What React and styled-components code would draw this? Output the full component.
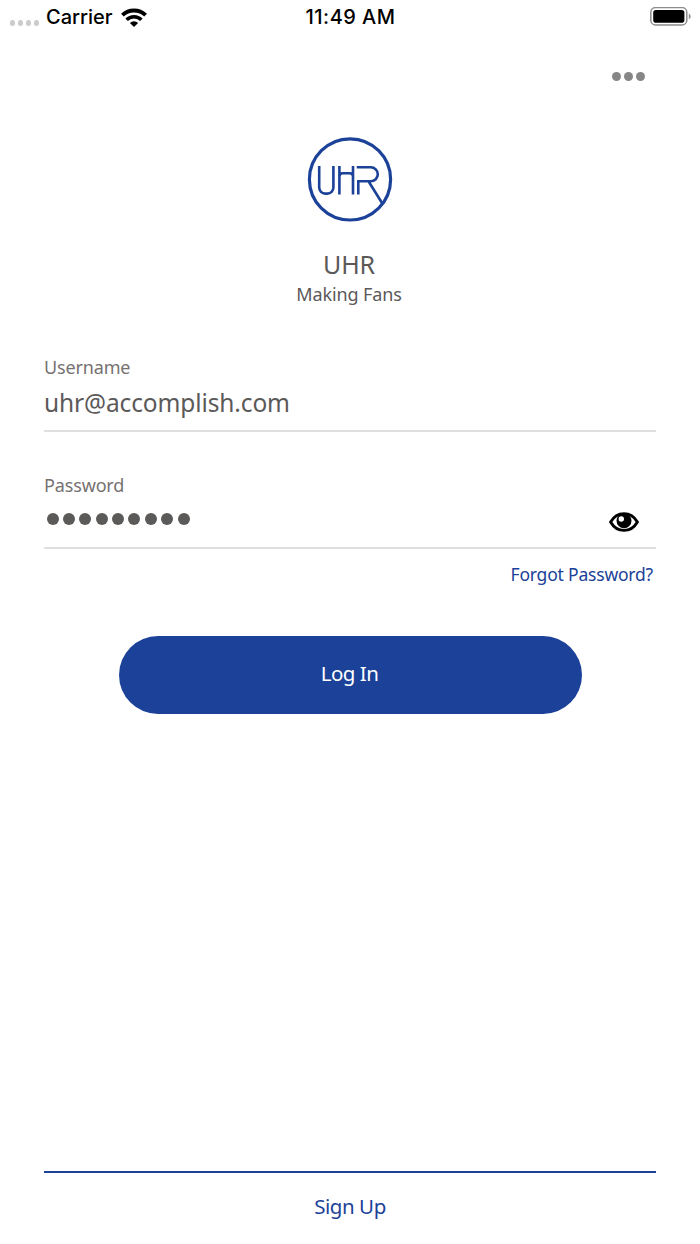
import React, { useState } from "react";
import styled, { createGlobalStyle, ThemeProvider } from "styled-components";

const theme = {
  blue: "#1b4298",
  text: "#5c5959",
  label: "#767171",
  line: "#e0e0e0",
};

const GlobalStyle = createGlobalStyle`
  * {
    box-sizing: border-box;
  }
  body {
    margin: 0;
    background: #fff;
    font-family: "Noto Sans", sans-serif;
  }
`;

const Screen = styled.div`
  width: 700px;
  height: 1244px;
  display: flex;
  flex-direction: column;
  overflow: hidden;
`;

const StatusBar = styled.header`
  height: 34px;
  display: grid;
  grid-template-columns: 1fr auto 1fr;
  align-items: center;
  padding: 0 9px 0 10px;
  font-family: Inter, sans-serif;
  font-size: 20px;
  line-height: 34px;
  font-weight: 500;
  color: #000;
`;

const StatusLeft = styled.div`
  display: flex;
  align-items: center;
  gap: 7px;
`;

const Signal = styled.div`
  display: flex;
  gap: 2.6px;
  padding-top: 12px;
`;

const StatusText = styled.span`
  letter-spacing: ${(props) => props.$spacing || "0"};
`;

const StatusRight = styled.div`
  display: flex;
  justify-content: flex-end;
`;

const Dot = styled.span`
  width: ${(props) => props.$size}px;
  height: ${(props) => props.$size}px;
  border-radius: 50%;
  background: ${(props) => props.$color};
`;

const MoreButton = styled.button`
  align-self: flex-end;
  display: flex;
  gap: 3px;
  margin: 38px 55.5px 0 0;
  padding: 0;
  border: 0;
  background: none;
`;

const Brand = styled.section`
  display: flex;
  flex-direction: column;
  align-items: center;
  margin-top: 56px;
`;

const Title = styled.h1`
  margin: 26px 2px 0 0;
  font-size: 25px;
  line-height: 30px;
  font-weight: 400;
  letter-spacing: -0.2px;
  color: ${(props) => props.theme.text};
`;

const Tagline = styled.p`
  margin: 3px 2px 0 0;
  font-size: 18px;
  line-height: 24px;
  letter-spacing: -0.1px;
  color: ${(props) => props.theme.text};
`;

const Form = styled.form`
  display: flex;
  flex-direction: column;
  margin: 49px 44px 0;
`;

const Field = styled.div`
  height: ${(props) => props.$height}px;
  border-bottom: 2px solid ${(props) => props.theme.line};
  margin-bottom: ${(props) => props.$gap || 0}px;
`;

const Label = styled.label`
  display: block;
  font-size: 18px;
  line-height: 24px;
  letter-spacing: -0.15px;
  color: ${(props) => props.theme.label};
`;

const Value = styled.div`
  display: flex;
  justify-content: space-between;
  align-items: center;
  margin-top: ${(props) => props.$top}px;
  height: 32px;
  font-size: 24.5px;
  line-height: 32px;
  letter-spacing: -0.12px;
  color: ${(props) => props.theme.text};
`;

const Mask = styled.div`
  display: flex;
  gap: 4.4px;
  padding: 0 0 1px 2.5px;
`;

const EyeButton = styled.button`
  display: flex;
  margin: 5px 17px 0 0;
  padding: 0;
  border: 0;
  background: none;
`;

const Forgot = styled.a`
  align-self: flex-end;
  margin: 13px 3px 0 0;
  font-size: 17.5px;
  line-height: 24px;
  letter-spacing: -0.2px;
  color: ${(props) => props.theme.blue};
`;

const LoginButton = styled.button`
  align-self: center;
  width: 463px;
  height: 78px;
  margin-top: 50px;
  padding: 0 1px 5px 0;
  border: 0;
  border-radius: 39px;
  background: ${(props) => props.theme.blue};
  color: #fff;
  font-family: inherit;
  font-size: 20.5px;
  line-height: 24px;
  letter-spacing: -0.5px;
`;

const Footer = styled.footer`
  margin: auto 44px 0;
  height: 73px;
  padding-top: 21px;
  border-top: 2px solid ${(props) => props.theme.blue};
  text-align: center;
  font-size: 20.5px;
  line-height: 24px;
  letter-spacing: -0.45px;
  color: ${(props) => props.theme.blue};
`;

const Wifi = () => (
  <svg width="28" height="19" viewBox="-1 0 28 19">
    <path d="M1.4 7.2a16.5 16.5 0 0 1 23.2 0" fill="none" stroke="#000" strokeWidth="3.9" />
    <path d="M5.6 11.7a10.5 10.5 0 0 1 14.8 0" fill="none" stroke="#000" strokeWidth="3.5" />
    <path d="M8.9 14.9a5.7 5.7 0 0 1 8.2 0L13 19z" />
  </svg>
);

const Battery = () => (
  <svg width="41" height="20" viewBox="0 0 41 20">
    <rect x="0.8" y="0.6" width="36" height="17.4" rx="4.8" fill="none" stroke="#8c8c8c" strokeWidth="1.5" />
    <rect x="3.2" y="2.9" width="31.2" height="12.8" rx="2.8" />
    <path d="M38.8 6.4c2.4.8 2.4 5 0 5.8z" fill="#8c8c8c" />
  </svg>
);

const Logo = () => (
  <svg width="86" height="86" viewBox="0 0 86 86" fill="none" stroke={theme.blue}>
    <circle cx="43" cy="42.4" r="40.6" strokeWidth="3.2" />
    <path
      d="M12.2 29v21.6a6 6 0 0 0 6 6h2.2a6 6 0 0 0 6-6V29M32.4 29v28.6M46 29v28.6M32.4 39.5c0-2 1-3.3 3.4-3.3h6.800c2.400 0 3.400 1.300 3.400 3.300M51.300 57.600V44.300H63.800a7 7 0 0 0 0-14H49.700M61.500 44.300l14 22.500"
      strokeWidth="2.6"
    />
  </svg>
);

const Eye = () => (
  <svg width="30" height="20" viewBox="0 0 30 20">
    <path d="M1.6 10C8-1.200 22-1.200 28.400 10 22 21.200 8 21.200 1.600 10z" fill="#fff" stroke="#000" strokeWidth="2.9" />
    <circle cx="15" cy="8.8" r="7.5" />
    <circle cx="12.3" cy="7" r="2.7" fill="#fff" />
  </svg>
);

const App = () => {
  const [visible, setVisible] = useState(false);
  const password = "uhrfans12";

  return (
    <ThemeProvider theme={theme}>
      <GlobalStyle />
      <Screen>
        <StatusBar>
          <StatusLeft>
            <Signal>
              {[0, 1, 2, 3].map((i) => (
                <Dot key={i} $size={5.3} $color="#cbcbcb" />
              ))}
            </Signal>
            <StatusText>Carrier</StatusText>
            <Wifi />
          </StatusLeft>
          <StatusText $spacing="0.45px">11:49 AM</StatusText>
          <StatusRight>
            <Battery />
          </StatusRight>
        </StatusBar>
        <MoreButton aria-label="More">
          {[0, 1, 2].map((i) => (
            <Dot key={i} $size={9} $color="#868686" />
          ))}
        </MoreButton>
        <Brand>
          <Logo />
          <Title>UHR</Title>
          <Tagline>Making Fans</Tagline>
        </Brand>
        <Form onSubmit={(e) => e.preventDefault()}>
          <Field $height={77} $gap={41}>
            <Label>Username</Label>
            <Value $top={8}>uhr@accomplish.com</Value>
          </Field>
          <Field $height={76}>
            <Label>Password</Label>
            <Value $top={6}>
              {visible ? (
                password
              ) : (
                <Mask>
                  {password.split("").map((_, i) => (
                    <Dot key={i} $size={12} $color={theme.text} />
                  ))}
                </Mask>
              )}
              <EyeButton type="button" aria-label="Show password" onClick={() => setVisible(!visible)}>
                <Eye />
              </EyeButton>
            </Value>
          </Field>
          <Forgot>Forgot Password?</Forgot>
          <LoginButton>Log In</LoginButton>
        </Form>
        <Footer>Sign Up</Footer>
      </Screen>
    </ThemeProvider>
  );
};

export default App;
